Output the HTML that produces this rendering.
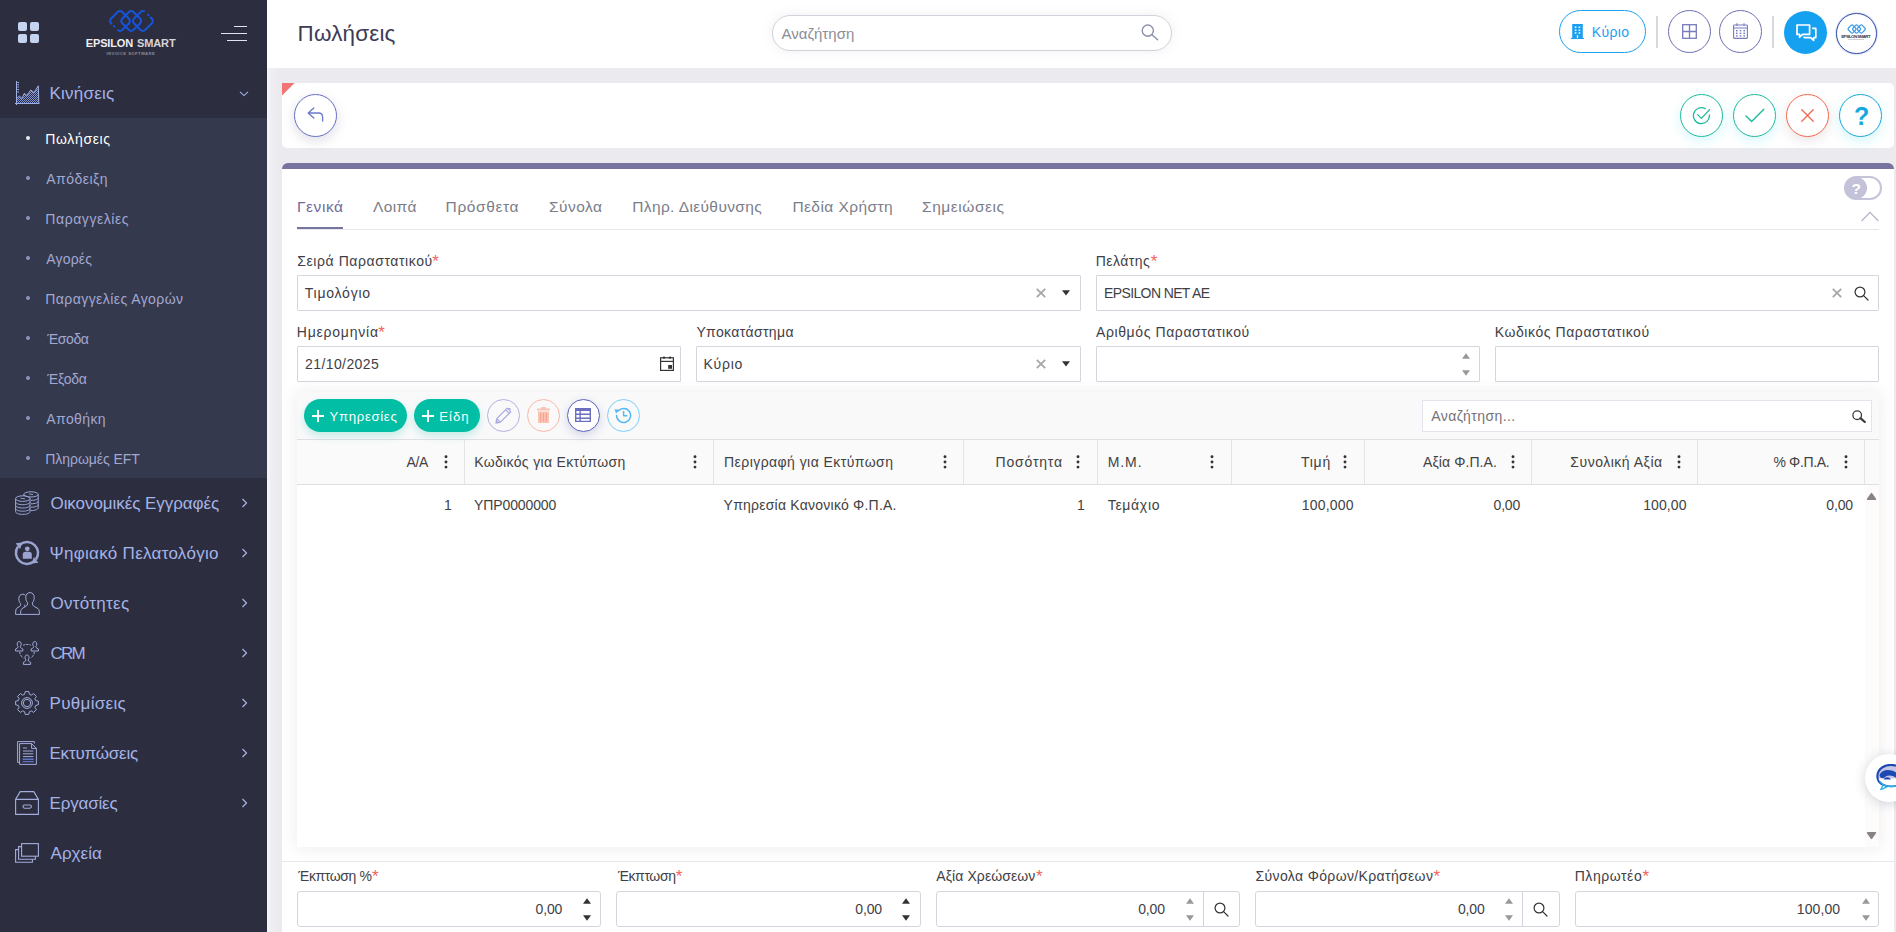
<!DOCTYPE html>
<html lang="el">
<head>
<meta charset="utf-8">
<title>Πωλήσεις - Epsilon Smart</title>
<style>
*{box-sizing:border-box;margin:0;padding:0}
html,body{width:1896px;height:932px;overflow:hidden}
body{position:relative;background:#eaeaef;font-family:"Liberation Sans",sans-serif;font-size:15px;color:#3f4047}
.abs,.t,svg.i{position:absolute}
.t{white-space:nowrap;font-family:"Liberation Sans",sans-serif}
/* sidebar */
#sidebar{left:0;top:0;width:267px;height:932px;background:#2c2d3f}
#submenu{left:0;top:118px;width:267px;height:360px;background:#34394d}
.dot{width:4px;height:4px;border-radius:50%;background:#8f95b8}
/* header */
#header{left:267px;top:0;width:1629px;height:68px;background:#fff}
#search{left:772px;top:15px;width:400px;height:36px;border:1px solid #d0d2dc;border-radius:18px;background:#fff;box-shadow:0 0 12px rgba(120,120,160,.12)}
.circ{border-radius:50%;background:#fff}
.vsep{width:2px;height:32px;background:#d6d8de;top:16px}
/* cards */
#toolbar{left:282px;top:83px;width:1612px;height:65px;background:#fff;border-radius:5px;overflow:hidden}
#main{left:282px;top:163px;width:1612px;height:769px;background:#fff;border-top:6px solid #77749f;border-radius:6px 6px 0 0}
.inp{height:36px;border:1px solid #d4d6de;background:#fff;border-radius:1px}
.hline{height:1px;background:#e7e8ee}
/* grid */
#grid{left:297px;top:392px;width:1582px;height:455px;background:#f9f9fa;box-shadow:0 1px 15px 1px rgba(69,65,78,.09)}
#gbody{left:297px;top:485px;width:1582px;height:362px;background:#fff}
#ghead{left:297px;top:439px;width:1582px;height:46px;background:#fafafa;border-top:1px solid #e0e0e4;border-bottom:1px solid #e0e0e3}
.csep{width:1px;height:44px;top:440px;background:#e4e4e7}
.pill{height:33px;border-radius:17px;background:#02bea4;box-shadow:0 4px 9px rgba(2,190,164,.22)}
</style>
</head>
<body>
<!-- ================= SIDEBAR ================= -->
<nav id="sidebar" class="abs"></nav>
<div id="submenu" class="abs"></div>
<!-- app grid -->
<svg class="i" style="left:18px;top:22px" width="21" height="21" viewBox="0 0 21 21"><g fill="#c4d4f0"><rect x="0" y="0" width="9" height="9" rx="2"/><rect x="12" y="0" width="9" height="9" rx="2"/><rect x="0" y="12" width="9" height="9" rx="2"/><rect x="12" y="12" width="9" height="9" rx="2"/></g></svg>
<!-- logo -->
<svg class="i" style="left:100px;top:5px" width="60" height="32" viewBox="100 5 60 32"><g fill="none" stroke="#1653d6" stroke-width="2.1">
<rect x="-8" y="-8" width="16" height="16" rx="3.5" transform="translate(120 21) rotate(45)" stroke-dasharray="29 3.5 2.2 1.9 21.4"/>
<rect x="-8" y="-8" width="16" height="16" rx="3.5" transform="translate(131.2 21) rotate(45)"/>
<rect x="-8" y="-8" width="16" height="16" rx="3.5" transform="translate(142.9 21) rotate(45)" stroke-dasharray="0 3 2.2 1.6 49.7 1.5"/>
</g></svg>
<!-- hamburger -->
<div class="abs" style="left:234px;top:26px;width:13px;height:1px;background:#dfe3f3"></div>
<div class="abs" style="left:221px;top:33px;width:26px;height:1px;background:#dfe3f3"></div>
<div class="abs" style="left:227px;top:40px;width:20px;height:1px;background:#dfe3f3"></div>
<!-- submenu bullets -->
<div class="abs dot" style="left:26px;top:136px;background:#e8eaf4"></div>
<div class="abs dot" style="left:26px;top:176px"></div>
<div class="abs dot" style="left:26px;top:216px"></div>
<div class="abs dot" style="left:26px;top:256px"></div>
<div class="abs dot" style="left:26px;top:296px"></div>
<div class="abs dot" style="left:26px;top:336px"></div>
<div class="abs dot" style="left:26px;top:376px"></div>
<div class="abs dot" style="left:26px;top:416px"></div>
<div class="abs dot" style="left:26px;top:456px"></div>
<!-- chevrons -->
<svg class="i" style="left:239px;top:91px" width="10" height="6" viewBox="0 0 10 6"><path d="M1 .8 L5 4.6 L9 .8" fill="none" stroke="#a5b3e6" stroke-width="1.1"/></svg>
<svg class="i chev" style="left:241px;top:498px" width="7" height="10" viewBox="0 0 7 10"><path d="M1.5 1 L5.5 5 L1.5 9" fill="none" stroke="#a9b4e2" stroke-width="1.2"/></svg>
<svg class="i chev" style="left:241px;top:548px" width="7" height="10" viewBox="0 0 7 10"><path d="M1.5 1 L5.5 5 L1.5 9" fill="none" stroke="#a9b4e2" stroke-width="1.2"/></svg>
<svg class="i chev" style="left:241px;top:598px" width="7" height="10" viewBox="0 0 7 10"><path d="M1.5 1 L5.5 5 L1.5 9" fill="none" stroke="#a9b4e2" stroke-width="1.2"/></svg>
<svg class="i chev" style="left:241px;top:648px" width="7" height="10" viewBox="0 0 7 10"><path d="M1.5 1 L5.5 5 L1.5 9" fill="none" stroke="#a9b4e2" stroke-width="1.2"/></svg>
<svg class="i chev" style="left:241px;top:698px" width="7" height="10" viewBox="0 0 7 10"><path d="M1.5 1 L5.5 5 L1.5 9" fill="none" stroke="#a9b4e2" stroke-width="1.2"/></svg>
<svg class="i chev" style="left:241px;top:748px" width="7" height="10" viewBox="0 0 7 10"><path d="M1.5 1 L5.5 5 L1.5 9" fill="none" stroke="#a9b4e2" stroke-width="1.2"/></svg>
<svg class="i chev" style="left:241px;top:798px" width="7" height="10" viewBox="0 0 7 10"><path d="M1.5 1 L5.5 5 L1.5 9" fill="none" stroke="#a9b4e2" stroke-width="1.2"/></svg>
<!-- menu icons (24x24) -->
<!-- 1 chart -->
<svg class="i" style="left:15px;top:81px" width="25" height="24" viewBox="0 0 25 24"><defs><pattern id="dots" width="2" height="2" patternUnits="userSpaceOnUse"><rect width="1" height="1" fill="#8093d4"/><rect x="1" y="1" width="1" height="1" fill="#8093d4"/></pattern></defs>
<path d="M1.5 17.6 L4.4 15.1 L6.9 17.4 L9.4 12.2 L11.7 14.5 L15.8 9 L19 11.6 L23.3 4.8 L23.8 22 L1.5 22Z" fill="url(#dots)"/>
<g fill="none" stroke="#9fb0e6" stroke-width="1"><path d="M1.5 0 V24 M0 22.5 H24.5"/><path d="M1.5 17.6 L4.4 15.1 L6.9 17.4 L9.4 12.2 L11.7 14.5 L15.8 9 L19 11.6 L23.3 4.8 L23.8 22" stroke-linejoin="round"/><path d="M2.3 1.5 H4 M2.3 3.7 H4 M2.3 6 H4 M2.3 8.5 H4 M2.3 11 H4"/></g></svg>
<!-- 2 coins -->
<svg class="i" style="left:15px;top:491px" width="24" height="24" viewBox="0 0 24 24"><g fill="none" stroke="#9ba7d6" stroke-width="1">
<ellipse cx="16" cy="3.4" rx="7.2" ry="2.6"/><path d="M23.2 3.4 V17 C23.2 18.2 20.5 19.6 15.4 19.6"/><path d="M23.2 6.8 C23.2 8.2 20.5 9.4 16 9.4 M23.2 10.2 C23.2 11.6 20.5 12.8 16 12.8 M23.2 13.6 C23.2 15 20.5 16.2 16 16.2"/><path d="M8.8 3.4 V4.6"/>
<ellipse cx="7.8" cy="7.6" rx="7.2" ry="2.8"/><path d="M.6 7.6 V20.6 C.6 22.2 3.8 23.4 7.8 23.4 S15 22.2 15 20.6 V7.6"/><path d="M.6 10.9 C.6 12.5 3.8 13.7 7.8 13.7 S15 12.5 15 10.9 M.6 14.2 C.6 15.8 3.8 17 7.8 17 S15 15.8 15 14.2 M.6 17.4 C.6 19 3.8 20.2 7.8 20.2 S15 19 15 17.4"/><path d="M5.5 7.2 L10 7.9 M14 2.9 L18 3.6" stroke-width=".9"/>
</g></svg>
<!-- 3 user sync -->
<svg class="i" style="left:14px;top:540px" width="26" height="26" viewBox="-1 -1 26 26"><g fill="none" stroke="#9ba3d0" stroke-width="2.5"><path d="M5.2 3.4 A11 11 0 0 1 21 18.4"/><path d="M18.8 20.6 A11 11 0 0 1 3 5.6"/></g><g fill="#9ba3d0"><path d="M.6 2.2 L7.2 1.6 L5.2 8Z"/><path d="M23.4 21.8 L16.8 22.4 L18.8 16Z"/><circle cx="12.3" cy="7.8" r="2.4"/><path d="M7.8 17.8 V13.6 Q7.8 10.8 10.6 10.8 H14 Q16.8 10.8 16.8 13.6 V17.8Z"/></g></svg>
<!-- 4 users -->
<svg class="i" style="left:15px;top:592px" width="25" height="23" viewBox="0 0 25 23"><g fill="none" stroke="#a3addc" stroke-width="1" stroke-linejoin="round">
<path d="M15 .6 C12.4 .6 10.8 2.6 10.8 5.6 C10.8 8 11.6 9.8 12.6 10.8 C12.8 12.6 12.2 13.6 10.8 14.4 L7 16.6 C6 17.4 5.6 19 5.6 22.4 H24.4 C24.4 19 24 17.4 23 16.6 L19.2 14.4 C17.8 13.6 17.2 12.6 17.4 10.8 C18.4 9.8 19.2 8 19.2 5.6 C19.2 2.6 17.6 .6 15 .6Z"/>
<path d="M10.6 3.4 C9.8 2.6 8.8 2.2 7.8 2.2 C5.4 2.2 3.8 4 3.8 6.8 C3.8 9 4.6 10.6 5.6 11.6 C5.8 13.2 5.2 14.2 4 14.8 L1.8 16.2 C.9 16.8 .6 18.6 .6 22.4 H5.6"/>
<path d="M10 12.6 C9.6 13.4 9.6 14 9.8 14.8"/>
</g></svg>
<!-- 5 CRM -->
<svg class="i" style="left:15px;top:641px" width="24" height="24" viewBox="0 0 24 24"><g fill="none" stroke="#a3addc" stroke-width="1" stroke-linejoin="round">
<path d="M4.2 .6 C2.8 .6 2.2 1.7 2.2 3 C2.2 4.2 2.6 5 3.1 5.5 C3.1 6.4 2.8 6.8 2 7.2 L.6 7.9 V10 H7.8 V7.9 L6.4 7.2 C5.6 6.8 5.3 6.4 5.3 5.5 C5.8 5 6.2 4.2 6.2 3 C6.2 1.7 5.6 .6 4.2 .6Z"/>
<path d="M4.2 .6 C2.8 .6 2.2 1.7 2.2 3 C2.2 4.2 2.6 5 3.1 5.5 C3.1 6.4 2.8 6.8 2 7.2 L.6 7.9 V10 H7.8 V7.9 L6.4 7.2 C5.6 6.8 5.3 6.4 5.3 5.5 C5.8 5 6.2 4.2 6.2 3 C6.2 1.7 5.6 .6 4.2 .6Z" transform="translate(15.6 0)"/>
<path d="M4.2 .6 C2.8 .6 2.2 1.7 2.2 3 C2.2 4.2 2.6 5 3.1 5.5 C3.1 6.4 2.8 6.8 2 7.2 L.6 7.9 V10 H7.8 V7.9 L6.4 7.2 C5.6 6.8 5.3 6.4 5.3 5.5 C5.8 5 6.2 4.2 6.2 3 C6.2 1.7 5.6 .6 4.2 .6Z" transform="translate(7.8 13.4)"/>
<path d="M8.2 4.2 C10.6 3.2 13.4 3.2 15.8 4.2 M4.6 11 C5 13.6 6.2 15.6 8.2 17 M19.4 11 C19 13.6 17.8 15.6 15.8 17" stroke-dasharray="2.2 1"/>
</g></svg>
<!-- 6 gear -->
<svg class="i" style="left:15px;top:691px" width="24" height="24" viewBox="0 0 24 24"><g fill="none" stroke="#a3addc" stroke-width="1" stroke-linejoin="round">
<path d="M10.2 .6 H13.8 L14.4 3.3 L16.3 4.1 L18.6 2.6 L21.4 5.4 L19.9 7.7 L20.7 9.6 L23.4 10.2 V13.8 L20.7 14.4 L19.9 16.3 L21.4 18.6 L18.6 21.4 L16.3 19.9 L14.4 20.7 L13.8 23.4 H10.2 L9.6 20.7 L7.7 19.9 L5.4 21.4 L2.6 18.6 L4.1 16.3 L3.3 14.4 L.6 13.8 V10.2 L3.3 9.6 L4.1 7.7 L2.6 5.4 L5.4 2.6 L7.7 4.1 L9.6 3.3Z"/>
<circle cx="12" cy="12" r="5.4"/><circle cx="12" cy="12" r="3.7"/></g></svg>
<!-- 7 docs -->
<svg class="i" style="left:17px;top:741px" width="20" height="24" viewBox="0 0 20 24"><g fill="none" stroke="#a3addc" stroke-width="1" stroke-linejoin="round">
<path d="M2.6 21.4 H.6 V.6 H17.4 V2.6"/><path d="M2.6 2.6 H14.6 L19.4 7.4 V23.4 H2.6Z"/><path d="M14.6 2.6 V7.4 H19.4"/>
<path d="M6 7 H10 M6 10 H16.4 M6 12.8 H16.4 M6 15.6 H16.4"/></g><path d="M5.6 17.6 H16.8 V19 H5.6Z M5.6 20 H16.8 V21.2 H5.6Z" fill="#5f74c8"/></svg>
<!-- 8 archive -->
<svg class="i" style="left:15px;top:791px" width="24" height="24" viewBox="0 0 24 24"><g fill="none" stroke="#a3addc" stroke-width="1.1" stroke-linejoin="round">
<path d="M.6 8.4 L5.2 .6 H18.8 L23.4 8.4"/><rect x=".6" y="8.4" width="22.8" height="15"/><rect x="8" y="14" width="8.4" height="3.2" rx="1.6"/></g></svg>
<!-- 9 layers -->
<svg class="i" style="left:15px;top:843px" width="24" height="20" viewBox="0 0 24 20"><g fill="none" stroke="#a3addc" stroke-width="1.1" stroke-linejoin="miter">
<rect x="6.6" y=".6" width="16.8" height="12.6"/><path d="M6.6 3.6 H3.6 V16.2 H20.4 V13.2"/><path d="M3.6 6.6 H.6 V19.2 H17.4 V16.2"/></g></svg>
<!-- brand text -->
<span class="t" style="left:106.4px;top:51px;font-size:4.2px;line-height:5px;color:#8c8a94;font-weight:700;letter-spacing:.42px">INVOICE SOFTWARE</span>


<div id="lstrip" class="abs" style="left:267px;top:68px;width:15px;height:864px;background:linear-gradient(90deg,#f6f6f9 0,#f0f0f4 3px,#eaeaef 11px)"></div>
<!-- ================= HEADER ================= -->
<header id="header" class="abs"></header>
<div id="search" class="abs"></div>
<!-- search magnifier -->
<svg class="i" style="left:1141px;top:24px" width="18" height="17" viewBox="0 0 18 17"><g fill="none" stroke="#8d90ad" stroke-width="1.4" stroke-linecap="round"><circle cx="6.8" cy="6.6" r="5.6"/><path d="M11 10.8 L16.6 15.8"/></g></svg>
<!-- Κύριο pill -->
<div class="abs" style="left:1559px;top:10px;width:87px;height:43px;border:1px solid #1b9ff1;border-radius:22px;background:#fff"></div>
<svg class="i" style="left:1571px;top:24px" width="13" height="15" viewBox="0 0 13 15"><path d="M1.2 0 H11.8 V14 H13 V15 H0 V14 H1.2Z M3.8 2.4 V4 H5.4 V2.4Z M7.6 2.4 V4 H9.2 V2.4Z M3.8 5.4 V7 H5.4 V5.4Z M7.6 5.4 V7 H9.2 V5.4Z M3.8 8.2 V9.8 H5.4 V8.2Z M7.6 8.2 V9.8 H9.2 V8.2Z M5.8 11.2 V14 H7.2 V11.2Z" fill="#1b9ff1" fill-rule="evenodd"/></svg>
<div class="abs vsep" style="left:1656px"></div>
<!-- grid circle -->
<div class="abs circ" style="left:1668px;top:10px;width:43px;height:43px;border:1px solid #6c6fb3"></div>
<svg class="i" style="left:1682px;top:24px" width="15" height="15" viewBox="0 0 15 15"><g fill="none" stroke="#777bbd" stroke-width="1.3"><rect x=".7" y=".7" width="13.6" height="13.6"/><path d="M7.5 .7 V14.3 M.7 7.5 H14.3"/></g></svg>
<!-- calendar circle -->
<div class="abs circ" style="left:1719px;top:10px;width:43px;height:43px;border:1px solid #6c6fb3"></div>
<svg class="i" style="left:1733px;top:23px" width="15" height="16" viewBox="0 0 15 16"><g fill="none" stroke="#777bbd" stroke-width="1.1"><rect x=".6" y="2" width="13.8" height="13.4" rx=".6"/><path d="M.6 5 H14.4 M4 .2 V3 M11 .2 V3"/></g><g fill="#777bbd"><rect x="3" y="7" width="1.6" height="1.4"/><rect x="6.7" y="7" width="1.6" height="1.4"/><rect x="10.4" y="7" width="1.6" height="1.4"/><rect x="3" y="9.6" width="1.6" height="1.4"/><rect x="6.7" y="9.6" width="1.6" height="1.4"/><rect x="10.4" y="9.6" width="1.6" height="1.4"/><rect x="3" y="12.2" width="1.6" height="1.4"/><rect x="6.7" y="12.2" width="1.6" height="1.4"/><rect x="10.4" y="12.2" width="1.6" height="1.4"/></g></svg>
<div class="abs vsep" style="left:1772px"></div>
<!-- chat circle -->
<div class="abs circ" style="left:1784px;top:11px;width:43px;height:43px;background:#16a0f0"></div>
<svg class="i" style="left:1796px;top:24px" width="21" height="18" viewBox="0 0 21 18"><g fill="none" stroke="#fff" stroke-width="1.7" stroke-linejoin="round"><path d="M1 1 H13.6 V10.4 H6.6 L3.6 13.2 V10.4 H1Z"/><path d="M16.2 4.4 H19.8 V13.6 H17.6 V16.4 L14.6 13.6 H8.2 V12.6"/></g></svg>
<!-- avatar -->
<div class="abs circ" style="left:1836px;top:13px;width:41px;height:41px;border:1.5px solid #3e55ad;box-shadow:0 0 1.5px #5a78c8"></div>
<svg class="i" style="left:1846px;top:23px" width="21" height="12" viewBox="105 7 52 28"><g fill="none" stroke="#3d9be9" stroke-width="3"><rect x="-8" y="-8" width="16" height="16" rx="3.5" transform="translate(120 21) rotate(45)"/><rect x="-8" y="-8" width="16" height="16" rx="3.5" transform="translate(131.2 21) rotate(45)"/><rect x="-8" y="-8" width="16" height="16" rx="3.5" transform="translate(142.9 21) rotate(45)"/></g></svg>
<div class="abs" style="left:1848px;top:39px;width:16px;height:1px;background:#cfcfd6"></div>


<!-- ================= TOOLBAR CARD ================= -->
<section id="toolbar" class="abs"></section>
<!-- red corner -->
<svg class="i" style="left:282px;top:83px" width="13" height="13" viewBox="0 0 13 13"><path d="M0 0 H12.6 L0 12.6Z" fill="#f27474"/></svg>
<!-- back -->
<div class="abs circ" style="left:294px;top:94px;width:43px;height:43px;border:1px solid #6670bd;box-shadow:0 4px 12px rgba(90,90,140,.2)"></div>
<svg class="i" style="left:307px;top:107px" width="17" height="15" viewBox="0 0 17 15"><path d="M6.8 1 L1.2 6 L6.8 11 M1.6 6 H11.6 Q15.6 6 15.6 10 V14" fill="none" stroke="#6c79c9" stroke-width="1.3" stroke-linecap="round" stroke-linejoin="round"/></svg>
<!-- save&new -->
<div class="abs circ" style="left:1680px;top:94px;width:43px;height:43px;border:1px solid #1cbb9b;box-shadow:0 4px 12px rgba(54,215,232,.2)"></div>
<svg class="i" style="left:1692px;top:106px" width="20" height="20" viewBox="0 0 20 20"><g fill="none" stroke="#1cbb9b" stroke-width="1.3" stroke-linecap="round" stroke-linejoin="round"><path d="M17.4 9 A8 8 0 1 1 13.2 2.6"/><path d="M5.6 8.6 L9.4 12.4 L17.6 3.6"/></g></svg>
<!-- save -->
<div class="abs circ" style="left:1733px;top:94px;width:43px;height:43px;border:1px solid #1cbb9b;box-shadow:0 4px 12px rgba(54,215,232,.2)"></div>
<svg class="i" style="left:1745px;top:108px" width="20" height="15" viewBox="0 0 20 15"><path d="M1 8 L6.6 13.4 L18.8 1.2" fill="none" stroke="#1cbb9b" stroke-width="1.4" stroke-linecap="round" stroke-linejoin="round"/></svg>
<!-- cancel -->
<div class="abs circ" style="left:1786px;top:94px;width:43px;height:43px;border:1px solid #f4664f;box-shadow:0 4px 12px rgba(150,120,120,.2)"></div>
<svg class="i" style="left:1801px;top:109px" width="13" height="13" viewBox="0 0 13 13"><path d="M.8 .8 L12.2 12.2 M12.2 .8 L.8 12.2" fill="none" stroke="#f4664f" stroke-width="1.3" stroke-linecap="round"/></svg>
<!-- help -->
<div class="abs circ" style="left:1839px;top:94px;width:43px;height:43px;border:1px solid #17a7d8;box-shadow:0 4px 12px rgba(54,215,232,.22)"></div>
<span class="t" style="left:1854px;top:102px;font-size:25px;line-height:29px;color:#16aadc;font-weight:700">?</span>


<!-- ================= MAIN CARD ================= -->
<main id="main" class="abs"></main>
<div class="abs hline" style="left:297px;top:229px;width:1582px"></div>
<div class="abs" style="left:297px;top:227px;width:46px;height:2px;background:#77749f"></div>
<!-- inputs -->
<div class="abs inp" style="left:297px;top:275px;width:784px"></div>
<div class="abs inp" style="left:1096px;top:275px;width:783px"></div>
<div class="abs inp" style="left:297px;top:346px;width:384px"></div>
<div class="abs inp" style="left:696px;top:346px;width:385px"></div>
<div class="abs inp" style="left:1096px;top:346px;width:384px"></div>
<div class="abs inp" style="left:1495px;top:346px;width:384px"></div>
<!-- toggle -->
<div class="abs" style="left:1844px;top:176px;width:38px;height:24px;border-radius:12px;border:2px solid #c6c4da;background:#fff"></div>
<div class="abs circ" style="left:1845px;top:177px;width:22px;height:22px;background:#c3c2d8"></div>
<span class="t" style="left:1851.6px;top:180px;font-size:15.5px;line-height:17px;color:#fff;font-weight:700">?</span>
<svg class="i" style="left:1861px;top:211px" width="18" height="11" viewBox="0 0 18 11"><path d="M.6 10 L9 1.4 L17.4 10" fill="none" stroke="#b4b3c8" stroke-width="1.2"/></svg>
<!-- combobox / picker icons -->
<svg class="i" style="left:1036px;top:288px" width="10" height="10" viewBox="0 0 10 10"><path d="M.8 .8 L9.2 9.2 M9.2 .8 L.8 9.2" fill="none" stroke="#a8a8a8" stroke-width="1.9"/></svg>
<svg class="i" style="left:1061.8px;top:290px" width="8" height="6" viewBox="0 0 8 6"><path d="M0 .2 H8 L4 5.6Z" fill="#333"/></svg>
<svg class="i" style="left:1832px;top:288px" width="10" height="10" viewBox="0 0 10 10"><path d="M.8 .8 L9.2 9.2 M9.2 .8 L.8 9.2" fill="none" stroke="#a8a8a8" stroke-width="1.9"/></svg>
<svg class="i" style="left:1853.5px;top:286.0px" width="15" height="15" viewBox="0 0 15 15"><g fill="none" stroke="#333" stroke-width="1.2" stroke-linecap="round"><circle cx="6" cy="6" r="4.9"/><path d="M9.6 9.6 L14 14"/></g></svg>
<svg class="i" style="left:660px;top:356px" width="14" height="15" viewBox="0 0 14 15"><g fill="none" stroke="#333" stroke-width="1.2"><rect x=".6" y="1.8" width="12.8" height="12.6"/><path d="M.6 5.4 H13.4"/></g><g fill="#333"><circle cx="4" cy="1.6" r="1.2"/><circle cx="10" cy="1.6" r="1.2"/><rect x="8.2" y="9" width="3.8" height="3.8"/></g></svg>
<svg class="i" style="left:1036px;top:359px" width="10" height="10" viewBox="0 0 10 10"><path d="M.8 .8 L9.2 9.2 M9.2 .8 L.8 9.2" fill="none" stroke="#a8a8a8" stroke-width="1.9"/></svg>
<svg class="i" style="left:1061.8px;top:361px" width="8" height="6" viewBox="0 0 8 6"><path d="M0 .2 H8 L4 5.6Z" fill="#333"/></svg>
<svg class="i" style="left:1461.6px;top:353.3px" width="8" height="6" viewBox="0 0 8 6"><path d="M0 5.8 H8 L4 .3Z" fill="#9a979c"/></svg><svg class="i" style="left:1461.6px;top:370.3px" width="8" height="6" viewBox="0 0 8 6"><path d="M0 .2 H8 L4 5.7Z" fill="#9a979c"/></svg>

<!-- grid -->
<div id="grid" class="abs"></div>
<div id="gbody" class="abs"></div>
<div id="ghead" class="abs"></div>
<!-- grid toolbar -->
<div class="abs pill" style="left:304px;top:399px;width:103px"></div>
<div class="abs pill" style="left:414px;top:399px;width:66px"></div>
<svg class="i" style="left:312px;top:410px" width="12" height="12" viewBox="0 0 12 12"><path d="M6 0 V12 M0 6 H12" stroke="#fff" stroke-width="2" fill="none"/></svg>
<svg class="i" style="left:422.3px;top:410px" width="12" height="12" viewBox="0 0 12 12"><path d="M6 0 V12 M0 6 H12" stroke="#fff" stroke-width="2" fill="none"/></svg>
<div class="abs circ" style="left:487px;top:399px;width:33px;height:33px;border:1px solid #b3b0e3;background:transparent"></div>
<svg class="i" style="left:495px;top:407px" width="17" height="17" viewBox="0 0 17 17"><g fill="none" stroke="#a9a8e0" stroke-width="1.2" stroke-linejoin="round"><path d="M12.2 1.2 L15.8 4.8 L5.4 15.2 L.9 16.1 L1.8 11.6Z"/><path d="M10.6 2.8 L14.2 6.4 M2 11.8 L5.2 15"/><path d="M13 1.8 Q14.8 1 15.6 2.6" /></g><path d="M1 16 L1.6 13.2 L3.8 15.4Z" fill="#a9a8e0"/></svg>
<div class="abs circ" style="left:527px;top:399px;width:33px;height:33px;border:1px solid #f7b9a8;background:transparent"></div>
<svg class="i" style="left:537px;top:407px" width="13" height="16" viewBox="0 0 13 16"><path d="M4.2 0 H8.8 V1.6 H13 V3.6 H0 V1.6 H4.2Z M1 4.6 H12 V16 H1Z" fill="#fac3b3"/><path d="M3.6 6 V14.4 M6.5 6 V14.4 M9.4 6 V14.4" stroke="#f3a48e" stroke-width="1.1"/></svg>
<div class="abs circ" style="left:567px;top:399px;width:33px;height:33px;border:1px solid #5d62b5;box-shadow:0 3px 10px rgba(93,98,181,.25)"></div>
<svg class="i" style="left:575px;top:408px" width="16" height="14" viewBox="0 0 16 14"><path d="M0 0 H16 V14 H0Z M1.4 3 V5.6 H4.4 V3Z M5.8 3 V5.6 H14.6 V3Z M1.4 7 V9.6 H4.4 V7Z M5.8 7 V9.6 H14.6 V7Z M1.4 11 V12.8 H4.4 V11Z M5.8 11 V12.8 H14.6 V11Z" fill="#6a6fbf" fill-rule="evenodd"/></svg>
<div class="abs circ" style="left:607px;top:399px;width:33px;height:33px;border:1px solid #7ccff8;background:transparent"></div>
<svg class="i" style="left:614px;top:407px" width="18" height="17" viewBox="0 0 18 17"><g fill="none" stroke="#53b9f0" stroke-width="1.5" stroke-linecap="round" stroke-linejoin="round"><path d="M2.6 8.6 A7 7 0 1 0 4.4 3.8"/><path d="M9.6 4.6 V8.8 H12.8"/></g><path d="M.6 2.2 L5.8 2.8 L2 6.6Z" fill="#53b9f0"/></svg>
<div class="abs" style="left:1422px;top:400px;width:450px;height:32px;border:1px solid #e4e5ec;background:#fff"></div>
<svg class="i" style="left:1852px;top:409.5px" width="14" height="13" viewBox="0 0 14 13"><circle cx="5.2" cy="5.2" r="4.3" fill="none" stroke="#3a3a3a" stroke-width="1.3"/><path d="M8.4 8.2 L12.8 12" stroke="#3a3a3a" stroke-width="2.2" stroke-linecap="round"/></svg>
<div class="abs csep" style="left:464px"></div>
<div class="abs csep" style="left:713px"></div>
<div class="abs csep" style="left:963px"></div>
<div class="abs csep" style="left:1097px"></div>
<div class="abs csep" style="left:1231px"></div>
<div class="abs csep" style="left:1364px"></div>
<div class="abs csep" style="left:1531px"></div>
<div class="abs csep" style="left:1697px"></div>
<div class="abs csep" style="left:1864px"></div>
<svg class="i" style="left:443.5px;top:455px" width="4" height="14" viewBox="0 0 4 14"><g fill="#333"><circle cx="2" cy="1.8" r="1.45"/><circle cx="2" cy="7" r="1.45"/><circle cx="2" cy="12.1" r="1.45"/></g></svg>
<svg class="i" style="left:692.5px;top:455px" width="4" height="14" viewBox="0 0 4 14"><g fill="#333"><circle cx="2" cy="1.8" r="1.45"/><circle cx="2" cy="7" r="1.45"/><circle cx="2" cy="12.1" r="1.45"/></g></svg>
<svg class="i" style="left:942.5px;top:455px" width="4" height="14" viewBox="0 0 4 14"><g fill="#333"><circle cx="2" cy="1.8" r="1.45"/><circle cx="2" cy="7" r="1.45"/><circle cx="2" cy="12.1" r="1.45"/></g></svg>
<svg class="i" style="left:1076.0px;top:455px" width="4" height="14" viewBox="0 0 4 14"><g fill="#333"><circle cx="2" cy="1.8" r="1.45"/><circle cx="2" cy="7" r="1.45"/><circle cx="2" cy="12.1" r="1.45"/></g></svg>
<svg class="i" style="left:1210.0px;top:455px" width="4" height="14" viewBox="0 0 4 14"><g fill="#333"><circle cx="2" cy="1.8" r="1.45"/><circle cx="2" cy="7" r="1.45"/><circle cx="2" cy="12.1" r="1.45"/></g></svg>
<svg class="i" style="left:1343.0px;top:455px" width="4" height="14" viewBox="0 0 4 14"><g fill="#333"><circle cx="2" cy="1.8" r="1.45"/><circle cx="2" cy="7" r="1.45"/><circle cx="2" cy="12.1" r="1.45"/></g></svg>
<svg class="i" style="left:1510.5px;top:455px" width="4" height="14" viewBox="0 0 4 14"><g fill="#333"><circle cx="2" cy="1.8" r="1.45"/><circle cx="2" cy="7" r="1.45"/><circle cx="2" cy="12.1" r="1.45"/></g></svg>
<svg class="i" style="left:1676.5px;top:455px" width="4" height="14" viewBox="0 0 4 14"><g fill="#333"><circle cx="2" cy="1.8" r="1.45"/><circle cx="2" cy="7" r="1.45"/><circle cx="2" cy="12.1" r="1.45"/></g></svg>
<svg class="i" style="left:1843.5px;top:455px" width="4" height="14" viewBox="0 0 4 14"><g fill="#333"><circle cx="2" cy="1.8" r="1.45"/><circle cx="2" cy="7" r="1.45"/><circle cx="2" cy="12.1" r="1.45"/></g></svg>
<div class="abs" style="left:1865px;top:485px;width:14px;height:362px;background:#fdfcfb"></div>
<svg class="i" style="left:1866px;top:492px" width="11" height="9" viewBox="0 0 11 9"><path d="M1.6 7.2 H9.4 L5.5 1.6Z" fill="#8a8186" stroke="#8a8186" stroke-width="1.6" stroke-linejoin="round"/></svg>
<svg class="i" style="left:1866px;top:831px" width="11" height="9" viewBox="0 0 11 9"><path d="M1.6 1.8 H9.4 L5.5 7.4Z" fill="#8a8186" stroke="#8a8186" stroke-width="1.6" stroke-linejoin="round"/></svg>
<div class="abs circ" style="left:1865px;top:754px;width:48px;height:48px;box-shadow:0 2px 12px rgba(60,60,100,.22)"></div>
<svg class="i" style="left:1876px;top:764px" width="20" height="27" viewBox="0 0 20 27"><path d="M20 1.6 C9 -1 1.2 5 1.4 12.4 C1.6 19 8 23.6 20 21.6" fill="#c9c6e6" stroke="#1d49b3" stroke-width="2.2"/><path d="M3.4 11 C6 5.6 13 4.6 20 8.4 V13.8 C15 10.2 9.6 11 7.8 14.6 C5.6 14.6 3.6 13.4 3.4 11Z" fill="#1d49b3"/><path d="M2.4 14.5 H20 V21 C12 22.6 5 20.4 2.4 14.5Z" fill="#fff"/><path d="M7.6 15.4 C9 12.6 13.4 12.6 15 15.6Z" fill="#1d49b3"/><path d="M7.2 20.6 L4.8 25.6 L11.2 22.8" fill="none" stroke="#2bb5ea" stroke-width="1.3" stroke-linejoin="round"/><path d="M3.6 17.4 C7.6 22.4 14 23.2 20 22" fill="none" stroke="#2bb5ea" stroke-width="1.5"/></svg>

<!-- bottom -->
<div class="abs hline" style="left:282px;top:861px;width:1612px"></div>
<div class="abs inp" style="left:297px;top:891px;width:304px;border-radius:3px"></div>
<div class="abs inp" style="left:616px;top:891px;width:305px;border-radius:3px"></div>
<div class="abs inp" style="left:936px;top:891px;width:304px;border-radius:3px"></div>
<div class="abs inp" style="left:1255px;top:891px;width:305px;border-radius:3px"></div>
<div class="abs inp" style="left:1575px;top:891px;width:304px;border-radius:3px"></div>
<svg class="i" style="left:583.4px;top:898.3px" width="8" height="6" viewBox="0 0 8 6"><path d="M0 5.8 H8 L4 .3Z" fill="#333"/></svg><svg class="i" style="left:583.4px;top:915.3px" width="8" height="6" viewBox="0 0 8 6"><path d="M0 .2 H8 L4 5.7Z" fill="#333"/></svg>
<svg class="i" style="left:902.2px;top:898.3px" width="8" height="6" viewBox="0 0 8 6"><path d="M0 5.8 H8 L4 .3Z" fill="#333"/></svg><svg class="i" style="left:902.2px;top:915.3px" width="8" height="6" viewBox="0 0 8 6"><path d="M0 .2 H8 L4 5.7Z" fill="#333"/></svg>
<svg class="i" style="left:1186.0px;top:898.3px" width="8" height="6" viewBox="0 0 8 6"><path d="M0 5.8 H8 L4 .3Z" fill="#9a979c"/></svg><svg class="i" style="left:1186.0px;top:915.3px" width="8" height="6" viewBox="0 0 8 6"><path d="M0 .2 H8 L4 5.7Z" fill="#9a979c"/></svg>
<svg class="i" style="left:1505.2px;top:898.3px" width="8" height="6" viewBox="0 0 8 6"><path d="M0 5.8 H8 L4 .3Z" fill="#9a979c"/></svg><svg class="i" style="left:1505.2px;top:915.3px" width="8" height="6" viewBox="0 0 8 6"><path d="M0 .2 H8 L4 5.7Z" fill="#9a979c"/></svg>
<svg class="i" style="left:1861.6px;top:898.3px" width="8" height="6" viewBox="0 0 8 6"><path d="M0 5.8 H8 L4 .3Z" fill="#9a979c"/></svg><svg class="i" style="left:1861.6px;top:915.3px" width="8" height="6" viewBox="0 0 8 6"><path d="M0 .2 H8 L4 5.7Z" fill="#9a979c"/></svg>
<div class="abs" style="left:1203px;top:892px;width:1px;height:34px;background:#d2d3dc"></div>
<div class="abs" style="left:1522px;top:892px;width:1px;height:34px;background:#d2d3dc"></div>
<svg class="i" style="left:1214.1px;top:901.9px" width="15" height="15" viewBox="0 0 15 15"><g fill="none" stroke="#333" stroke-width="1.2" stroke-linecap="round"><circle cx="6" cy="6" r="4.9"/><path d="M9.6 9.6 L14 14"/></g></svg>
<svg class="i" style="left:1533.3px;top:901.9px" width="15" height="15" viewBox="0 0 15 15"><g fill="none" stroke="#333" stroke-width="1.2" stroke-linecap="round"><circle cx="6" cy="6" r="4.9"/><path d="M9.6 9.6 L14 14"/></g></svg>

<!-- ================= TEXT ================= -->
<span class="t" style="left:49.50px;top:84px;font-size:17px;line-height:19px;color:#a5b3e6;letter-spacing:0.226px;">Κινήσεις</span>
<span class="t" style="left:50.50px;top:494px;font-size:17px;line-height:19px;color:#a5b3e6;letter-spacing:-0.064px;">Οικονομικές Εγγραφές</span>
<span class="t" style="left:49.50px;top:544px;font-size:17px;line-height:19px;color:#a5b3e6;letter-spacing:0.291px;">Ψηφιακό Πελατολόγιο</span>
<span class="t" style="left:50.50px;top:594px;font-size:17px;line-height:19px;color:#a5b3e6;letter-spacing:0.298px;">Οντότητες</span>
<span class="t" style="left:50.50px;top:644px;font-size:17px;line-height:19px;color:#a5b3e6;letter-spacing:-1.777px;">CRM</span>
<span class="t" style="left:49.50px;top:694px;font-size:17px;line-height:19px;color:#a5b3e6;letter-spacing:0.311px;">Ρυθμίσεις</span>
<span class="t" style="left:49.50px;top:744px;font-size:17px;line-height:19px;color:#a5b3e6;letter-spacing:-0.218px;">Εκτυπώσεις</span>
<span class="t" style="left:49.50px;top:794px;font-size:17px;line-height:19px;color:#a5b3e6;letter-spacing:-0.169px;">Εργασίες</span>
<span class="t" style="left:50.50px;top:844px;font-size:17px;line-height:19px;color:#a5b3e6;letter-spacing:0.042px;">Αρχεία</span>
<span class="t" style="left:85.80px;top:37px;font-size:11px;line-height:12px;color:#eeeef2;letter-spacing:-0.157px;font-weight:700;">EPSILON</span>
<span class="t" style="left:136.90px;top:37px;font-size:11px;line-height:12px;color:#d6d4da;letter-spacing:-0.097px;font-weight:700;">SMART</span>
<span class="t" style="left:45.30px;top:131px;font-size:14px;line-height:16px;color:#ffffff;letter-spacing:0.635px;">Πωλήσεις</span>
<span class="t" style="left:46.30px;top:171px;font-size:14px;line-height:16px;color:#a2a8d2;letter-spacing:0.472px;">Απόδειξη</span>
<span class="t" style="left:45.30px;top:211px;font-size:14px;line-height:16px;color:#a2a8d2;letter-spacing:0.565px;">Παραγγελίες</span>
<span class="t" style="left:46.30px;top:251px;font-size:14px;line-height:16px;color:#a2a8d2;letter-spacing:0.185px;">Αγορές</span>
<span class="t" style="left:45.30px;top:291px;font-size:14px;line-height:16px;color:#a2a8d2;letter-spacing:0.426px;">Παραγγελίες Αγορών</span>
<span class="t" style="left:47.30px;top:331px;font-size:14px;line-height:16px;color:#a2a8d2;letter-spacing:-0.425px;">Έσοδα</span>
<span class="t" style="left:47.30px;top:371px;font-size:14px;line-height:16px;color:#a2a8d2;letter-spacing:-0.238px;">Έξοδα</span>
<span class="t" style="left:46.30px;top:411px;font-size:14px;line-height:16px;color:#a2a8d2;letter-spacing:0.390px;">Αποθήκη</span>
<span class="t" style="left:45.30px;top:451px;font-size:14px;line-height:16px;color:#a2a8d2;letter-spacing:-0.057px;">Πληρωμές EFT</span>
<span class="t" style="left:297.60px;top:21px;font-size:22.4px;line-height:25px;color:#3d3b56;letter-spacing:0.193px;">Πωλήσεις</span>
<span class="t" style="left:781.50px;top:25px;font-size:15px;line-height:17px;color:#8c8c96;letter-spacing:0.048px;">Αναζήτηση</span>
<span class="t" style="left:1591.80px;top:24px;font-size:14px;line-height:16px;color:#1b9ff1;letter-spacing:0.358px;">Κύριο</span>
<span class="t" style="left:1841.20px;top:34px;font-size:4.4px;line-height:5px;color:#3a3a46;letter-spacing:-0.552px;font-weight:700;">EPSILON SMART</span>
<span class="t" style="left:297.00px;top:198px;font-size:15.5px;line-height:17px;color:#6f6c9b;letter-spacing:0.560px;">Γενικά</span>
<span class="t" style="left:373.00px;top:198px;font-size:15.5px;line-height:17px;color:#7b7e8a;letter-spacing:0.377px;">Λοιπά</span>
<span class="t" style="left:445.60px;top:198px;font-size:15.5px;line-height:17px;color:#7b7e8a;letter-spacing:0.624px;">Πρόσθετα</span>
<span class="t" style="left:549.00px;top:198px;font-size:15.5px;line-height:17px;color:#7b7e8a;letter-spacing:0.470px;">Σύνολα</span>
<span class="t" style="left:632.20px;top:198px;font-size:15.5px;line-height:17px;color:#7b7e8a;letter-spacing:0.386px;">Πληρ. Διεύθυνσης</span>
<span class="t" style="left:792.40px;top:198px;font-size:15.5px;line-height:17px;color:#7b7e8a;letter-spacing:0.427px;">Πεδία Χρήστη</span>
<span class="t" style="left:922.00px;top:198px;font-size:15.5px;line-height:17px;color:#7b7e8a;letter-spacing:0.566px;">Σημειώσεις</span>
<span class="t" style="left:297.30px;top:253px;font-size:14px;line-height:16px;color:#3f4047;letter-spacing:0.568px;">Σειρά Παραστατικού</span>
<span class="t" style="left:432.20px;top:252px;font-size:17px;line-height:19px;color:#f2635c;">*</span>
<span class="t" style="left:1095.70px;top:253px;font-size:14px;line-height:16px;color:#3f4047;letter-spacing:0.475px;">Πελάτης</span>
<span class="t" style="left:1150.80px;top:252px;font-size:17px;line-height:19px;color:#f2635c;">*</span>
<span class="t" style="left:296.80px;top:324px;font-size:14px;line-height:16px;color:#3f4047;letter-spacing:0.774px;">Ημερομηνία</span>
<span class="t" style="left:378.20px;top:323px;font-size:17px;line-height:19px;color:#f2635c;">*</span>
<span class="t" style="left:696.40px;top:324px;font-size:14px;line-height:16px;color:#3f4047;letter-spacing:0.368px;">Υποκατάστημα</span>
<span class="t" style="left:1096.00px;top:324px;font-size:14px;line-height:16px;color:#3f4047;letter-spacing:0.596px;">Αριθμός Παραστατικού</span>
<span class="t" style="left:1494.70px;top:324px;font-size:14px;line-height:16px;color:#3f4047;letter-spacing:0.572px;">Κωδικός Παραστατικού</span>
<span class="t" style="left:304.70px;top:285px;font-size:14px;line-height:16px;color:#3f4047;letter-spacing:0.773px;">Τιμολόγιο</span>
<span class="t" style="left:1104.00px;top:285px;font-size:14px;line-height:16px;color:#3f4047;letter-spacing:-0.616px;">EPSILON NET AE</span>
<span class="t" style="left:305.00px;top:356px;font-size:14px;line-height:16px;color:#3f4047;letter-spacing:0.413px;">21/10/2025</span>
<span class="t" style="left:703.50px;top:356px;font-size:14px;line-height:16px;color:#3f4047;letter-spacing:0.733px;">Κύριο</span>
<span class="t" style="left:329.60px;top:409px;font-size:13.2px;line-height:15px;color:#ffffff;letter-spacing:0.655px;">Υπηρεσίες</span>
<span class="t" style="left:439.20px;top:409px;font-size:13.2px;line-height:15px;color:#ffffff;letter-spacing:1.011px;">Είδη</span>
<span class="t" style="left:1431.20px;top:408px;font-size:14px;line-height:16px;color:#757278;letter-spacing:0.427px;">Αναζήτηση...</span>
<span class="t" style="left:406.50px;top:454px;font-size:14px;line-height:16px;color:#424242;letter-spacing:-0.364px;">Α/Α</span>
<span class="t" style="left:474.20px;top:454px;font-size:14px;line-height:16px;color:#424242;letter-spacing:0.337px;">Κωδικός για Εκτύπωση</span>
<span class="t" style="left:724.00px;top:454px;font-size:14px;line-height:16px;color:#424242;letter-spacing:0.443px;">Περιγραφή για Εκτύπωση</span>
<span class="t" style="left:995.50px;top:454px;font-size:14px;line-height:16px;color:#424242;letter-spacing:0.818px;">Ποσότητα</span>
<span class="t" style="left:1107.70px;top:454px;font-size:14px;line-height:16px;color:#424242;letter-spacing:0.929px;">Μ.Μ.</span>
<span class="t" style="left:1300.90px;top:454px;font-size:14px;line-height:16px;color:#424242;letter-spacing:0.764px;">Τιμή</span>
<span class="t" style="left:1423.00px;top:454px;font-size:14px;line-height:16px;color:#424242;letter-spacing:0.090px;">Αξία Φ.Π.Α.</span>
<span class="t" style="left:1570.30px;top:454px;font-size:14px;line-height:16px;color:#424242;letter-spacing:0.514px;">Συνολική Αξία</span>
<span class="t" style="left:1773.40px;top:454px;font-size:14px;line-height:16px;color:#424242;letter-spacing:-0.334px;">% Φ.Π.Α.</span>
<span class="t" style="left:444.00px;top:497px;font-size:14px;line-height:16px;color:#424242;">1</span>
<span class="t" style="left:474.00px;top:497px;font-size:14px;line-height:16px;color:#424242;letter-spacing:-0.111px;">ΥΠΡ0000000</span>
<span class="t" style="left:723.60px;top:497px;font-size:14px;line-height:16px;color:#424242;letter-spacing:0.227px;">Υπηρεσία Κανονικό Φ.Π.Α.</span>
<span class="t" style="left:1077.00px;top:497px;font-size:14px;line-height:16px;color:#424242;">1</span>
<span class="t" style="left:1107.70px;top:497px;font-size:14px;line-height:16px;color:#424242;letter-spacing:0.688px;">Τεμάχιο</span>
<span class="t" style="left:1301.80px;top:497px;font-size:14px;line-height:16px;color:#424242;letter-spacing:0.197px;">100,000</span>
<span class="t" style="left:1493.50px;top:497px;font-size:14px;line-height:16px;color:#424242;letter-spacing:-0.154px;">0,00</span>
<span class="t" style="left:1643.20px;top:497px;font-size:14px;line-height:16px;color:#424242;letter-spacing:0.093px;">100,00</span>
<span class="t" style="left:1826.30px;top:497px;font-size:14px;line-height:16px;color:#424242;letter-spacing:-0.154px;">0,00</span>
<span class="t" style="left:298.30px;top:868px;font-size:14px;line-height:16px;color:#3f4047;letter-spacing:-0.390px;">Έκπτωση %</span>
<span class="t" style="left:372.00px;top:867px;font-size:17px;line-height:19px;color:#f2635c;">*</span>
<span class="t" style="left:617.90px;top:868px;font-size:14px;line-height:16px;color:#3f4047;letter-spacing:-0.374px;">Έκπτωση</span>
<span class="t" style="left:675.80px;top:867px;font-size:17px;line-height:19px;color:#f2635c;">*</span>
<span class="t" style="left:936.30px;top:868px;font-size:14px;line-height:16px;color:#3f4047;letter-spacing:0.084px;">Αξία Χρεώσεων</span>
<span class="t" style="left:1035.90px;top:867px;font-size:17px;line-height:19px;color:#f2635c;">*</span>
<span class="t" style="left:1255.60px;top:868px;font-size:14px;line-height:16px;color:#3f4047;letter-spacing:0.354px;">Σύνολα Φόρων/Κρατήσεων</span>
<span class="t" style="left:1433.50px;top:867px;font-size:17px;line-height:19px;color:#f2635c;">*</span>
<span class="t" style="left:1574.70px;top:868px;font-size:14px;line-height:16px;color:#3f4047;letter-spacing:0.548px;">Πληρωτέο</span>
<span class="t" style="left:1642.40px;top:867px;font-size:17px;line-height:19px;color:#f2635c;">*</span>
<span class="t" style="left:535.60px;top:901px;font-size:14px;line-height:16px;color:#3f4047;letter-spacing:-0.154px;">0,00</span>
<span class="t" style="left:855.30px;top:901px;font-size:14px;line-height:16px;color:#3f4047;letter-spacing:-0.154px;">0,00</span>
<span class="t" style="left:1138.20px;top:901px;font-size:14px;line-height:16px;color:#3f4047;letter-spacing:-0.154px;">0,00</span>
<span class="t" style="left:1457.90px;top:901px;font-size:14px;line-height:16px;color:#3f4047;letter-spacing:-0.154px;">0,00</span>
<span class="t" style="left:1796.80px;top:901px;font-size:14px;line-height:16px;color:#3f4047;letter-spacing:0.093px;">100,00</span>
</body>
</html>
